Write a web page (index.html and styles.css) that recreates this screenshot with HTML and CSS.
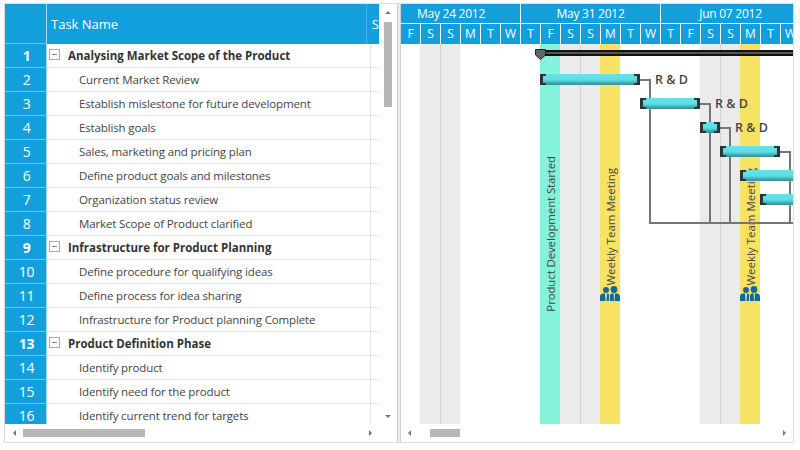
FILE: index.html
```html
<!DOCTYPE html>
<html>
<head>
    <title>Gantt Chart</title>
    <link rel="stylesheet" href="styles.css">
</head>
<body>
    <div class="gantt">
        <div class="left-pane">
            <div class="grid-area">
                <div class="grid">
                    <div class="grid-header">
                        <div class="idx"></div>
                        <div class="name-head">Task Name</div>
                        <div class="extra-head">S</div>
                    </div>
                    <div class="grid-body">
                        <div class="row parent"><div class="idx">1</div><div class="name"><span class="toggle"></span>Analysing Market Scope of the Product</div><div class="extra"></div></div>
                        <div class="row"><div class="idx">2</div><div class="name">Current Market Review</div><div class="extra"></div></div>
                        <div class="row"><div class="idx">3</div><div class="name">Establish mislestone for future development</div><div class="extra"></div></div>
                        <div class="row"><div class="idx">4</div><div class="name">Establish goals</div><div class="extra"></div></div>
                        <div class="row"><div class="idx">5</div><div class="name">Sales, marketing and pricing plan</div><div class="extra"></div></div>
                        <div class="row"><div class="idx">6</div><div class="name">Define product goals and milestones</div><div class="extra"></div></div>
                        <div class="row"><div class="idx">7</div><div class="name">Organization status review</div><div class="extra"></div></div>
                        <div class="row"><div class="idx">8</div><div class="name">Market Scope of Product clarified</div><div class="extra"></div></div>
                        <div class="row parent"><div class="idx">9</div><div class="name"><span class="toggle"></span>Infrastructure for Product Planning</div><div class="extra"></div></div>
                        <div class="row"><div class="idx">10</div><div class="name">Define procedure for qualifying ideas</div><div class="extra"></div></div>
                        <div class="row"><div class="idx">11</div><div class="name">Define process for idea sharing</div><div class="extra"></div></div>
                        <div class="row"><div class="idx">12</div><div class="name">Infrastructure for Product planning Complete</div><div class="extra"></div></div>
                        <div class="row parent"><div class="idx">13</div><div class="name"><span class="toggle"></span>Product Definition Phase</div><div class="extra"></div></div>
                        <div class="row"><div class="idx">14</div><div class="name">Identify product</div><div class="extra"></div></div>
                        <div class="row"><div class="idx">15</div><div class="name">Identify need for the product</div><div class="extra"></div></div>
                        <div class="row"><div class="idx">16</div><div class="name">Identify current trend for targets</div><div class="extra"></div></div>
                    </div>
                </div>
                <div class="vscroll">
                    <span class="arrow-up"></span>
                    <span class="vthumb"></span>
                    <span class="arrow-down"></span>
                </div>
            </div>
            <div class="hscroll left-hscroll">
                <span class="arrow-left"></span>
                <span class="hthumb"></span>
                <span class="arrow-right"></span>
            </div>
        </div>

        <div class="splitter"></div>

        <div class="chart-pane">
            <div class="months">
                <div class="month w6">May 24 2012</div>
                <div class="month w7">May 31 2012</div>
                <div class="month w7">Jun 07 2012</div>
            </div>
            <div class="days">
                <div class="day">F</div><div class="day">S</div><div class="day">S</div><div class="day">M</div><div class="day">T</div><div class="day">W</div>
                <div class="day">T</div><div class="day">F</div><div class="day">S</div><div class="day">S</div><div class="day">M</div><div class="day">T</div><div class="day">W</div>
                <div class="day">T</div><div class="day">F</div><div class="day">S</div><div class="day">S</div><div class="day">M</div><div class="day">T</div><div class="day">W</div>
            </div>
            <div class="chart-body">
                <div class="bands">
                    <div class="band"></div><div class="band weekend"></div><div class="band weekend"></div><div class="band"></div><div class="band"></div><div class="band"></div>
                    <div class="band"></div><div class="band started"><span class="band-text">Product Development Started</span></div><div class="band weekend"></div><div class="band weekend"></div>
                    <div class="band meeting"><span class="band-text">Weekly Team Meeting</span><svg class="people" viewBox="0 0 20 15"><circle cx="6" cy="4" r="3"/><circle cx="14" cy="3.500" r="3.400"/><path d="M0 15V11Q0 8 3 7.600L5 7.400L5.500 15ZM6.500 15L7 7.400L9 8V15ZM10 15V9Q10 8 12 7.400L13.500 7.200L14 15ZM14.500 15L15 7.200L18 7.800Q20 8.400 20 11V15Z"/></svg></div>
                    <div class="band"></div><div class="band"></div><div class="band"></div><div class="band"></div><div class="band weekend"></div><div class="band weekend"></div>
                    <div class="band meeting"><span class="band-text">Weekly Team Meeting</span><svg class="people" viewBox="0 0 20 15"><circle cx="6" cy="4" r="3"/><circle cx="14" cy="3.500" r="3.400"/><path d="M0 15V11Q0 8 3 7.600L5 7.400L5.500 15ZM6.500 15L7 7.400L9 8V15ZM10 15V9Q10 8 12 7.400L13.500 7.200L14 15ZM14.500 15L15 7.200L18 7.800Q20 8.400 20 11V15Z"/></svg></div>
                    <div class="band"></div><div class="band"></div>
                </div>

                <svg class="links" width="393" height="380" viewBox="400 44 393 380">
                    <path d="M640 80H650V223H793M700 104H710V223M720 128H730V223M780 152H790V223"/>
                </svg>

                <div class="summary"></div>
                <svg class="summary-cap" viewBox="0 0 11 11"><path d="M.5 .5H10.500V6L5.500 10.500L.5 6Z"/></svg>

                <div class="bar bar1"></div><span class="bar-label label1">R &amp; D</span>
                <div class="bar bar2"></div><span class="bar-label label2">R &amp; D</span>
                <div class="bar bar3"></div><span class="bar-label label3">R &amp; D</span>
                <div class="bar bar4"></div>
                <div class="bar bar5 open-end"></div>
                <div class="bar bar6 open-end"></div>
            </div>
            <div class="hscroll chart-hscroll">
                <span class="arrow-left"></span>
                <span class="hthumb"></span>
                <span class="arrow-right"></span>
            </div>
        </div>
    </div>
</body>
</html>
```

FILE: styles.css
```css
body {
  margin: 0;
  font-family: "Open Sans", sans-serif;
  background: #fff;
}

.gantt {
  display: flex;
  width: 788px;
  height: 438px;
  margin: 3px 0 0 4px;
  border: 1px solid #dcdcdc;
  overflow: hidden;
}

/* left grid */
.left-pane {
  width: 392px;
  flex: none;
  display: flex;
  flex-direction: column;
}

.grid-area {
  display: flex;
  height: 420px;
}

.grid {
  width: 374px;
  overflow: hidden;
}

.grid-header {
  display: flex;
  height: 40px;
  background: #129fdc;
  color: #fff;
  font-size: 13px;
}

.grid-header .idx {
  height: 39px;
}

.name-head {
  width: 319px;
  padding-left: 4px;
  line-height: 40px;
  border-right: 1px solid #4db4e4;
}

.extra-head {
  padding-left: 5px;
  line-height: 40px;
}

.grid-body {
  height: 380px;
  overflow: hidden;
}

.row {
  display: flex;
  height: 24px;
  font-size: 11.500px;
  letter-spacing: -0.140px;
  color: #444;
}

.idx {
  width: 39px;
  padding-left: 2px;
  flex: none;
  background: #129fdc;
  color: #fff;
  font-size: 14px;
  letter-spacing: -0.300px;
  text-align: center;
  line-height: 23px;
  border-right: 1px solid #a6d9f1;
  border-bottom: 1px solid #6fc3ea;
  height: 23px;
}

.name {
  width: 291px;
  padding-left: 32px;
  line-height: 23px;
  white-space: nowrap;
  border-right: 1px solid #e2e2e2;
  border-bottom: 1px solid #e2e2e2;
}

.extra {
  flex: 1;
  border-bottom: 1px solid #e2e2e2;
}

.parent .idx {
  font-weight: bold;
}

.parent .name {
  display: flex;
  align-items: center;
  padding-left: 2px;
  width: 321px;
  font-weight: bold;
  letter-spacing: 0;
  color: #333;
}

.toggle {
  position: relative;
  width: 9px;
  height: 9px;
  margin-right: 8px;
  margin-bottom: 3px;
  border: 1px solid #aaa;
}

.toggle::after {
  content: "";
  position: absolute;
  left: 2px;
  top: 4px;
  width: 5px;
  height: 1px;
  background: #888;
}

/* scrollbars */
.vscroll {
  width: 17px;
  flex: none;
  display: flex;
  flex-direction: column;
  align-items: flex-start;
  padding-left: 5px;
  box-sizing: border-box;
}

.arrow-up {
  margin: 7px 0 0 1px;
  border-left: 3px solid transparent;
  border-right: 3px solid transparent;
  border-bottom: 3px solid #777;
}

.vthumb {
  width: 8px;
  height: 85px;
  margin-top: 8px;
  background: #b7b7b7;
}

.arrow-down {
  margin: auto 0 6px 1px;
  border-left: 3px solid transparent;
  border-right: 3px solid transparent;
  border-top: 3px solid #777;
}

.hscroll {
  display: flex;
  align-items: center;
  height: 18px;
}

.arrow-left {
  border-top: 3px solid transparent;
  border-bottom: 3px solid transparent;
  border-right: 3px solid #777;
}

.arrow-right {
  border-top: 3px solid transparent;
  border-bottom: 3px solid transparent;
  border-left: 3px solid #777;
}

.hthumb {
  height: 8px;
  background: #b7b7b7;
}

.left-hscroll .arrow-left {
  margin-left: 8px;
}

.left-hscroll .hthumb {
  width: 122px;
  margin-left: 7px;
}

.left-hscroll .arrow-right {
  margin-left: 224px;
}

.chart-hscroll .arrow-left {
  margin-left: 8px;
}

.chart-hscroll .hthumb {
  width: 30px;
  margin-left: 19px;
}

.chart-hscroll .arrow-right {
  margin-left: 323px;
}

.splitter {
  position: relative;
  width: 2px;
  flex: none;
  margin-right: -1px;
  background: #ececec;
  border-left: 1px solid #cfcfcf;
  border-right: 1px solid #cfcfcf;
}

/* chart */
.chart-pane {
  width: 393px;
  flex: none;
  overflow: hidden;
}

.months,
.days {
  display: flex;
  width: 400px;
  background: #129fdc;
  color: #fff;
  text-align: center;
}

.months {
  height: 20px;
  font-size: 12px;
  letter-spacing: -0.250px;
  line-height: 19px;
}

.month {
  box-sizing: border-box;
  border-bottom: 1px solid #fff;
  border-left: 1px solid #fff;
}

.month:first-child {
  border-left-color: #129fdc;
  padding-right: 19px;
}

.w6 {
  width: 120px;
}

.w7 {
  width: 140px;
}

.days {
  height: 20px;
  font-size: 12px;
  line-height: 20px;
}

.day {
  width: 20px;
  box-sizing: border-box;
  border-left: 1px solid #fff;
}

.day:first-child {
  border-left-color: #129fdc;
}

.chart-body {
  position: relative;
  height: 380px;
  overflow: hidden;
}

.bands {
  display: flex;
  width: 400px;
  height: 380px;
}

.band {
  position: relative;
  width: 20px;
  flex: none;
}

.weekend {
  background: #ebebeb;
}

.weekend + .weekend {
  border-left: 1px solid #d2d2d2;
  box-sizing: border-box;
}

.started {
  background: #85f2dc;
}

.meeting {
  background: #f8e264;
}

.band-text {
  position: absolute;
  left: 2px;
  writing-mode: vertical-rl;
  transform: rotate(180deg);
  font-size: 11.500px;
  line-height: 18px;
  white-space: nowrap;
  color: #444;
}

.started .band-text {
  bottom: 112px;
  letter-spacing: -0.140px;
}

.meeting .band-text {
  bottom: 138px;
}

.people {
  position: absolute;
  left: 0;
  top: 242px;
  width: 20px;
  height: 15px;
  fill: #0a6aa1;
}

.links {
  position: absolute;
  left: 0;
  top: 0;
}

.links path {
  fill: none;
  stroke: #757575;
  stroke-width: 2;
}

.summary {
  position: absolute;
  left: 136px;
  top: 6px;
  width: 260px;
  height: 2px;
  background: #555;
  border: 2px solid #111;
  border-left: none;
}

.summary-cap {
  position: absolute;
  left: 135px;
  top: 5px;
  width: 11px;
  height: 11px;
  fill: #666;
  stroke: #222;
}

.bar {
  position: absolute;
  height: 11px;
  box-sizing: border-box;
  background: linear-gradient(#66e2ea 0%, #5edce6 55%, #4aa9b4 78%, #3f8a94 100%);
  border-left: 3px solid #2c3438;
  border-right: 3px solid #2c3438;
}

.bar::before,
.bar::after {
  content: "";
  position: absolute;
  top: 0;
  width: 3px;
  height: 11px;
  box-sizing: border-box;
  border-top: 2px solid #2c3438;
  border-bottom: 2px solid #2c3438;
}

.bar::before {
  left: 0;
}

.bar::after {
  right: 0;
}

.open-end {
  border-right: none;
}

.open-end::after {
  display: none;
}

.bar1 {
  left: 140px;
  top: 30px;
  width: 100px;
}

.bar2 {
  left: 240px;
  top: 54px;
  width: 60px;
}

.bar3 {
  left: 300px;
  top: 78px;
  width: 20px;
}

.bar4 {
  left: 320px;
  top: 102px;
  width: 60px;
}

.bar5 {
  left: 340px;
  top: 126px;
  width: 60px;
}

.bar6 {
  left: 360px;
  top: 150px;
  width: 40px;
}

.bar-label {
  position: absolute;
  font-size: 12.500px;
  font-weight: 600;
  line-height: 16px;
  color: #444;
  white-space: nowrap;
}

.label1 {
  left: 255px;
  top: 28px;
}

.label2 {
  left: 315px;
  top: 52px;
}

.label3 {
  left: 335px;
  top: 76px;
}
```
